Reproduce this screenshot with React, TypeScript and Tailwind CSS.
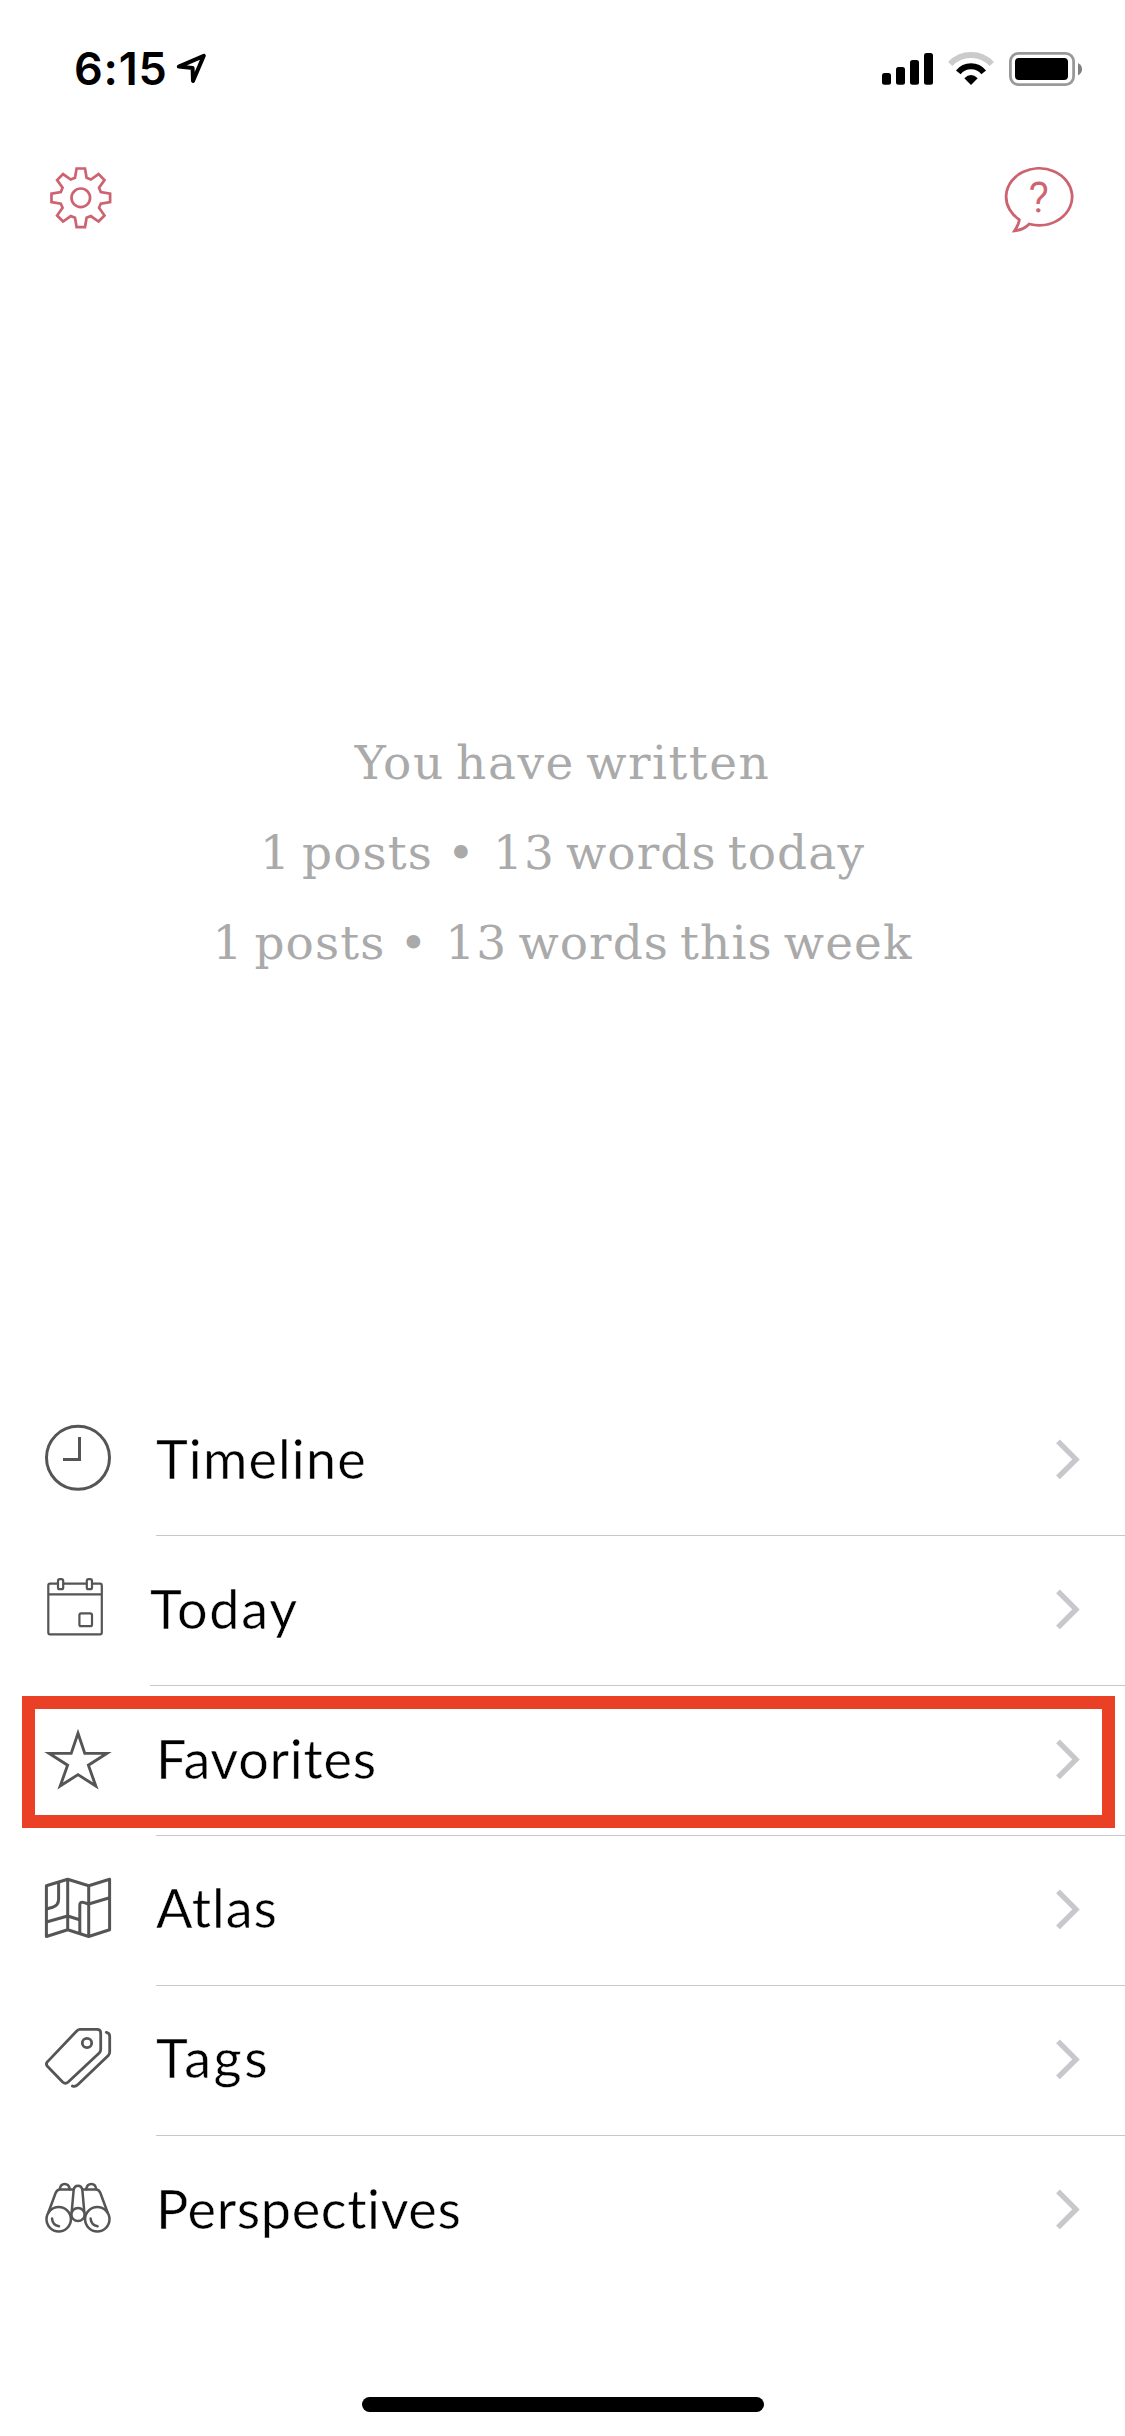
import type { ReactNode } from "react";

const toothProfile: [number, number][] = [
  [-5.8, -20],
  [-4.2, -29.3],
  [4.2, -29.3],
  [5.8, -20],
];

const gearPoints = Array.from({ length: 8 }, (_, i) => (i * Math.PI) / 4)
  .flatMap((a) =>
    toothProfile.map(
      ([x, y]) =>
        `${(x * Math.cos(a) - y * Math.sin(a)).toFixed(2)},${(x * Math.sin(a) + y * Math.cos(a)).toFixed(2)}`,
    ),
  )
  .join(" ");

function StatusBar() {
  return (
    <div className="flex h-[140px] items-start pt-[50px]">
      <span className="ml-[74px] w-[101px] whitespace-nowrap font-['Inter',sans-serif] text-[45px] leading-[38px] font-semibold tracking-[0.8px] text-black">
        6:15
      </span>
      <svg width="36" height="38" viewBox="175 50 36 38" fill="none" stroke="#000" strokeWidth="4" strokeLinejoin="round">
        <path d="M178.8 66.6 203.8 55.8 193 81 192.6 68Z" />
      </svg>
      <svg className="mr-10 ml-auto" width="205" height="40" viewBox="0 0 205 40">
        <rect x="2" y="23" width="9" height="11.8" rx="2.5" />
        <rect x="16" y="17" width="9" height="17.8" rx="2.5" />
        <rect x="30" y="10" width="9" height="24.8" rx="2.5" />
        <rect x="44" y="3" width="9" height="31.8" rx="2.5" />
        <path d="M70.2 14A28.5 28.5 0 0 1 111.8 14" fill="none" stroke="#cbcbcb" strokeWidth="6" />
        <path d="M78.3 22.3A16.4 16.4 0 0 1 103.7 22.3" fill="none" stroke="#000" strokeWidth="6" />
        <path d="M84.3 28.2Q91 21.8 97.7 28.2L91 34.9Z" />
        <rect x="130.4" y="3.4" width="63.2" height="31.2" rx="8" fill="none" stroke="#999" strokeWidth="2.8" />
        <rect x="135" y="8" width="53" height="22" rx="4" />
        <path d="M198 13Q202 15 202 19.2T198 25.3Z" fill="#808080" />
      </svg>
    </div>
  );
}

function Toolbar() {
  return (
    <div className="flex h-[120px] justify-between px-[45px] pt-5">
      <svg width="72" height="76" viewBox="-35.8 -37.8 72 76" fill="none" stroke="#cd6270" strokeWidth="2.7">
        <polygon points={gearPoints} />
        <circle r="9.3" />
      </svg>
      <svg className="mt-[5px] mr-[6px]" width="72" height="72" viewBox="0 0 72 72">
        <path
          d="M17.3 54.6A33 28.5 0 1 1 27.2 59C23 63.5 17.5 65.3 12.5 65.8C15 62 17 58.5 17.3 54.6Z"
          fill="none"
          stroke="#cd6270"
          strokeWidth="2.8"
        />
        <text
          x="36.8"
          y="47.3"
          textAnchor="middle"
          fill="#cd6270"
          stroke="#cd6270"
          strokeWidth="0.8"
          className="font-['Roboto',sans-serif] text-[43px] font-light"
        >
          ?
        </text>
      </svg>
    </div>
  );
}

function ClockIcon() {
  return (
    <g strokeWidth="3">
      <circle cx="48" cy="46.8" r="31.5" />
      <path d="M49.5 26V48.5H33" />
    </g>
  );
}

function CalendarIcon() {
  return (
    <g strokeWidth="2.2">
      <path d="M27.8 22.7H20Q18.3 22.7 18.3 24.5V71.5Q18.3 73.3 20 73.3H70Q71.8 73.3 71.8 71.5V24.5Q71.8 22.7 70 22.7H62M33.5 22.7H56.5M18.3 33.3H71.8" />
      <rect x="28" y="18.2" width="5.2" height="10" rx="1.8" />
      <rect x="56.8" y="18.2" width="5.2" height="10" rx="1.8" />
      <rect x="49.4" y="52.4" width="12.6" height="12.8" rx="1.8" />
    </g>
  );
}

function StarIcon() {
  return (
    <path
      strokeWidth="2.9"
      strokeMiterlimit="10"
      d="M48 22.3 54.8 42.4H76.8L58.4 54.2 65.8 75 48 63.6 30.2 75 37.6 54.2 19.2 42.4H41.2Z"
    />
  );
}

function MapIcon() {
  return (
    <g strokeWidth="3" strokeLinejoin="round">
      <path d="M16.4 24.7 37.7 18.3 58.7 24.7 79.6 18.3V68.7L58.7 75.5 37.7 68.7 16.4 75.5ZM37.7 18.3V68.7M58.7 24.7V75.5" />
      <path d="M28.6 21.3V38Q28.6 44.6 22.7 46.2L16.4 48M16.4 61 37.7 55 49.6 58.7M49.8 72V44Q49.8 40.6 53.3 41.4L58.7 43 79.6 36.7" />
    </g>
  );
}

function TagsIcon() {
  return (
    <g strokeWidth="2.8" strokeLinecap="round">
      <path d="M50 18.3H67Q70.7 18.3 70.7 22V38.4Q70.7 40.4 69.2 41.9L38.2 71Q35.4 73.6 32.6 71L17.6 55.6Q15.2 53 17.6 50.6L47 19.7Q48.4 18.3 50 18.3Z" />
      <circle cx="57" cy="32" r="4.7" />
      <path d="M76.3 21.3Q79.7 22 79.7 25.2V41Q79.7 43 78.3 44.4L48 73.6Q45.2 76.3 42.4 75" />
    </g>
  );
}

function BinocularsIcon() {
  return (
    <g strokeWidth="2.5" strokeLinecap="round">
      <circle cx="28.7" cy="58.3" r="12.2" />
      <circle cx="67.3" cy="58.3" r="12.2" />
      <circle cx="48" cy="53.5" r="6.6" />
      <path d="M41.7 51 43.7 28.5Q44.4 24.8 48 24.8T52.3 28.5L54.3 51" />
      <path d="M18.4 51.5 25.6 32Q27 28.4 30 28.4H43.4M77.6 51.5 70.4 32Q69 28.4 66 28.4H52.6" />
      <path d="M29.8 28.2Q30.5 22.9 34.7 22.9T39.8 28.2M56.2 28.2Q57 22.9 61.3 22.9T66.2 28.2" />
      <path d="M22 57.6Q22.6 64 29 65.3M60.6 57.6Q61.2 64 67.6 65.3" />
    </g>
  );
}

function Row({
  icon,
  label,
  labelClass,
  last = false,
  narrow = false,
  children,
}: {
  icon: ReactNode;
  label: string;
  labelClass: string;
  last?: boolean;
  narrow?: boolean;
  children?: ReactNode;
}) {
  return (
    <li className="relative flex h-[150px] items-stretch">
      <div className={narrow ? "flex w-[150px] items-center pl-[30px]" : "flex w-[156px] items-center pl-[30px]"}>
        <svg className="shrink-0" width="100" height="100" viewBox="0 0 100 100" fill="none" stroke="#555">
          {icon}
        </svg>
      </div>
      <div
        className={
          last
            ? "flex flex-1 items-center justify-between pr-[43px]"
            : "flex flex-1 items-center justify-between border-b border-[#c8c7cc] pr-[43px]"
        }
      >
        <span
          className={`whitespace-nowrap font-['Lato',sans-serif] text-[54px] leading-[64px] text-black [-webkit-text-stroke:0.5px_white] ${labelClass}`}
        >
          {label}
        </span>
        <svg width="26" height="44" viewBox="0 0 26 44" fill="none" stroke="#c7c7cc" strokeWidth="5.3">
          <path d="M2 2.4 20 20.4 2 38.4" />
        </svg>
      </div>
      {children}
    </li>
  );
}

const Bullet = () => <span className="mr-[6px] ml-[3px]">•</span>;

export default function App() {
  return (
    <div className="flex h-[2436px] w-[1125px] flex-col overflow-hidden bg-white">
      <StatusBar />
      <Toolbar />
      <div className="flex h-[1126px] flex-col items-center pt-[458px] whitespace-nowrap font-['DejaVu_Serif',serif] text-[47px] leading-[90px] text-[#aaa] [word-spacing:-5px]">
        <p className="tracking-[1.5px]">You have written</p>
        <p className="tracking-[1.1px]">
          1 posts <Bullet /> 13 words today
        </p>
        <p className="tracking-[1.1px]">
          1 posts <Bullet /> 13 words this week
        </p>
      </div>
      <ul className="flex flex-col">
        <Row icon={<ClockIcon />} label="Timeline" labelClass="pb-[3px] tracking-[1.1px]" />
        <Row icon={<CalendarIcon />} label="Today" labelClass="pb-[3px] tracking-[1.7px]" narrow />
        <Row icon={<StarIcon />} label="Favorites" labelClass="pb-[4px] tracking-[0.7px]">
          <div className="absolute top-[10px] left-[22px] h-[132px] w-[1093px] border-[13px] border-[#ea4025]" />
        </Row>
        <Row icon={<MapIcon />} label="Atlas" labelClass="pb-[5px] tracking-[0.9px]" />
        <Row icon={<TagsIcon />} label="Tags" labelClass="pb-[5px] tracking-[2.5px]" />
        <Row icon={<BinocularsIcon />} label="Perspectives" labelClass="pb-[5px] tracking-[0.6px]" last />
      </ul>
      <div className="mt-auto mb-6 h-[15px] w-[402px] self-center rounded-full bg-black" />
    </div>
  );
}
